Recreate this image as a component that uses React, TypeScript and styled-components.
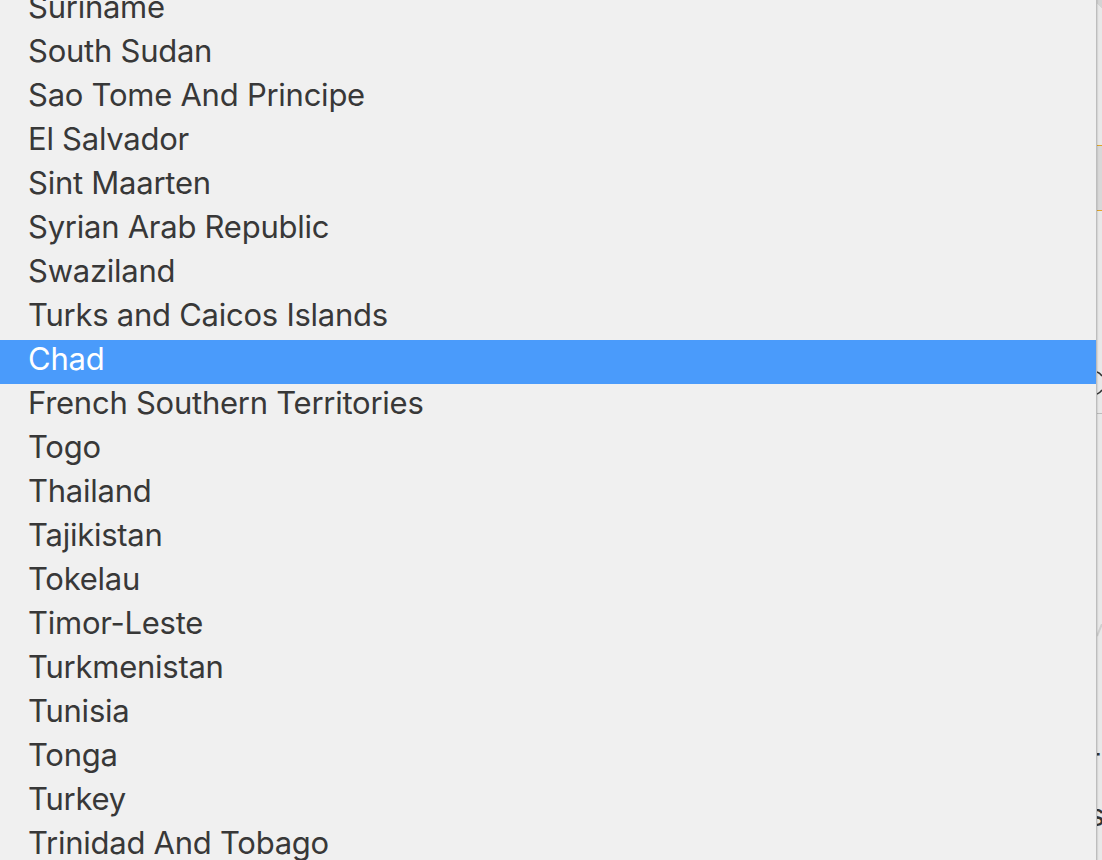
import styled, { createGlobalStyle } from 'styled-components';

const countries = [
  'Suriname',
  'South Sudan',
  'Sao Tome And Principe',
  'El Salvador',
  'Sint Maarten',
  'Syrian Arab Republic',
  'Swaziland',
  'Turks and Caicos Islands',
  'Chad',
  'French Southern Territories',
  'Togo',
  'Thailand',
  'Tajikistan',
  'Tokelau',
  'Timor-Leste',
  'Turkmenistan',
  'Tunisia',
  'Tonga',
  'Turkey',
  'Trinidad And Tobago',
];

const selected = 'Chad';

const GlobalStyle = createGlobalStyle`
  html, body {
    margin: 0;
    padding: 0;
    width: 1102px;
    height: 860px;
    overflow: hidden;
  }
  body {
    font-family: "Inter", "Noto Sans", sans-serif;
    background: #e6e6e6;
  }
`;

const Screen = styled.div`
  display: flex;
  flex-direction: row;
  width: 1102px;
  height: 860px;
  overflow: hidden;
`;

const Menu = styled.ul`
  flex: 0 0 1096px;
  margin: 0;
  padding: 0;
  list-style: none;
  background: #f0f0f0;
  overflow: hidden;
  border-right: 1px solid #bdbdbd;
  box-shadow: 1px 0 1px rgba(0, 0, 0, 0.08);
  position: relative;
  z-index: 1;
`;

const Items = styled.div`
  margin-top: -12px;
`;

const Option = styled.li<{ $active?: boolean }>`
  box-sizing: border-box;
  height: 44px;
  display: flex;
  align-items: center;
  padding: 0 0 8px 28px;
  font-size: 31px;
  letter-spacing: -0.25px;
  white-space: nowrap;
  color: ${({ $active }) => ($active ? '#ffffff' : '#383838')};
  background: ${({ $active }) => ($active ? '#4a9bfb' : 'transparent')};
`;

const Backdrop = styled.div`
  flex: 1;
  display: flex;
  flex-direction: column;
  background: #e8e8e8;
  overflow: hidden;
`;

const Corner = styled.div`
  height: 12px;
  background: linear-gradient(45deg, #e8e8e8 50%, #d4d4d4 50%);
`;

const Field = styled.div`
  margin-top: 133px;
  height: 64px;
  background: #d8d8d8;
  border-top: 1px solid #e0a52a;
  border-bottom: 1px solid #e0a52a;
`;

const Curve = styled.svg`
  display: block;
  margin-top: 158px;
  width: 5px;
  height: 30px;
`;

const Rule = styled.div`
  margin-top: 14px;
  height: 1px;
  background: #bcbcbc;
`;

const Slash = styled.svg`
  display: block;
  margin-top: 210px;
  width: 5px;
  height: 40px;
`;

const Glyph = styled.div<{ $top: number }>`
  margin-top: ${({ $top }) => $top}px;
  margin-left: -8px;
  font-size: 30px;
  line-height: 34px;
  color: #333;
`;

export default function App() {
  return (
    <>
      <GlobalStyle />
      <Screen>
        <Menu>
          <Items>
            {countries.map((name) => (
              <Option key={name} $active={name === selected}>
                {name}
              </Option>
            ))}
          </Items>
        </Menu>
        <Backdrop>
          <Corner />
          <Field />
          <Curve viewBox="0 0 5 30">
            <path d="M0 3 Q3 4 5 7" stroke="#333" strokeWidth="1.5" fill="none" />
            <path d="M0 25 Q3 24 5 21" stroke="#333" strokeWidth="1.5" fill="none" />
          </Curve>
          <Rule />
          <Slash viewBox="0 0 5 40">
            <path d="M5 0 L0 12" stroke="#cfcfcf" strokeWidth="2" fill="none" />
          </Slash>
          <Glyph $top={78}>r</Glyph>
          <Glyph $top={22}>s</Glyph>
        </Backdrop>
      </Screen>
    </>
  );
}
